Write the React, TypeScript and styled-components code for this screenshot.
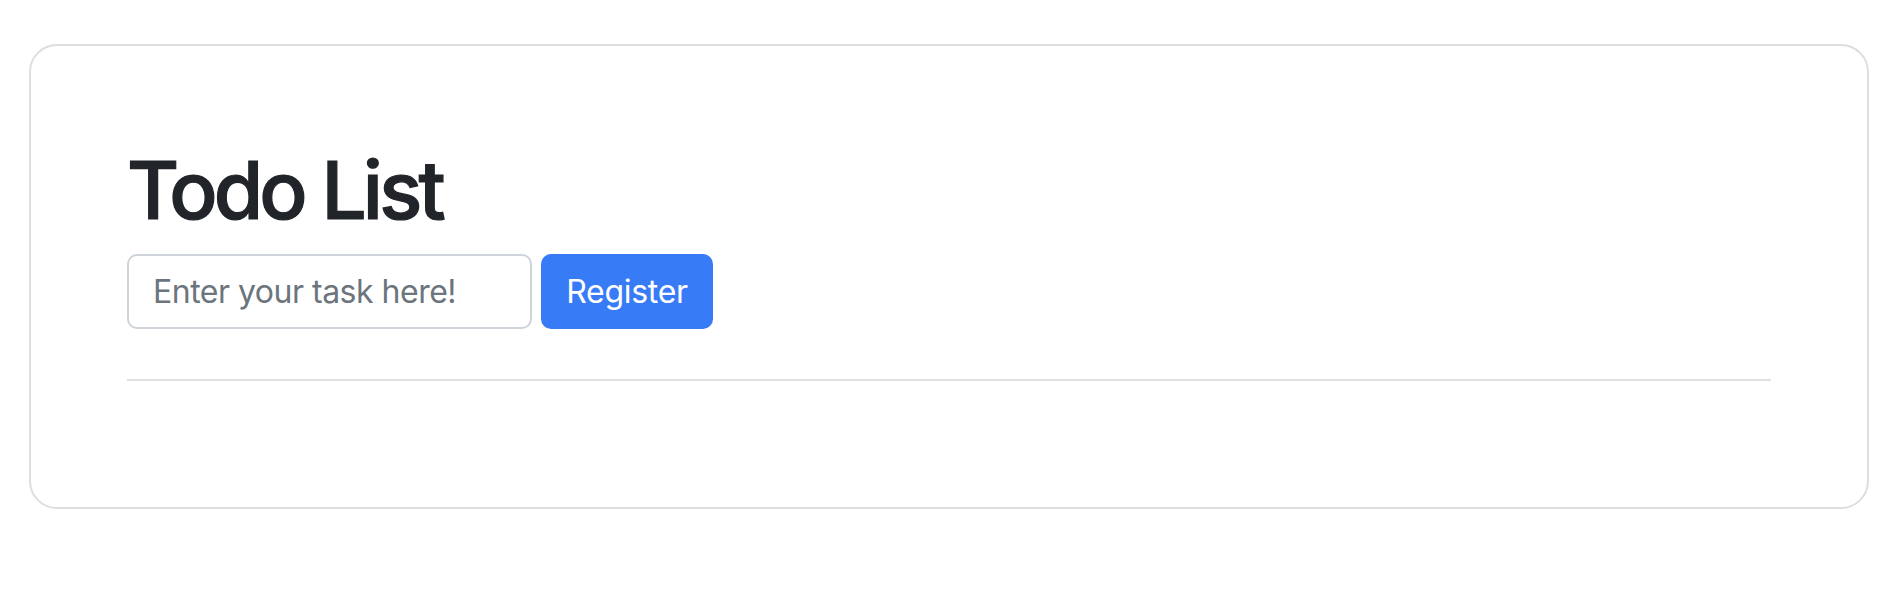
import React, { useState } from 'react';
import styled, { createGlobalStyle } from 'styled-components';

const GlobalStyle = createGlobalStyle`
    html, body {
        margin: 0;
        padding: 0;
        background: #ffffff;
    }
    * {
        box-sizing: border-box;
    }
`;

const Page = styled.div`
    padding: 44px 35px 0 29px;
    font-family: Inter, 'Liberation Sans', sans-serif;
`;

const Card = styled.div`
    border: 2px solid #dedede;
    border-radius: 28px;
    padding: 96px;
    background: #fff;
`;

const Title = styled.h1`
    margin: 0 0 16px 0;
    font-size: 80px;
    line-height: 96px;
    font-weight: 500;
    color: #212529;
    letter-spacing: -3.8px;
    -webkit-text-stroke: 1.2px #212529;
`;

const Form = styled.form`
    display: flex;
    align-items: stretch;
    gap: 9px;
`;

const TaskInput = styled.input`
    width: 405px;
    height: 75px;
    padding: 0 24px;
    border: 2px solid #ced4da;
    border-radius: 10px;
    font-family: inherit;
    font-size: 32px;
    letter-spacing: -0.5px;
    color: #212529;
    outline: none;
    &::placeholder {
        color: #6c757d;
    }
`;

const RegisterButton = styled.button`
    width: 172px;
    height: 75px;
    border: none;
    border-radius: 10px;
    background: #387bf7;
    color: #fff;
    font-family: inherit;
    font-size: 32px;
    letter-spacing: -0.3px;
    cursor: pointer;
`;

const Divider = styled.hr`
    margin: 50px 0 30px 0;
    border: none;
    border-top: 2px solid #dfdfdf;
`;

const TodoList = styled.ul`
    margin: 0;
    padding: 0;
    list-style: none;
`;

export default function App() {
    const [task, setTask] = useState('');
    const [todos, setTodos] = useState<string[]>([]);

    const handleSubmit = (e: React.FormEvent) => {
        e.preventDefault();
        if (!task.trim()) return;
        setTodos([...todos, task.trim()]);
        setTask('');
    };

    return (
        <Page>
            <GlobalStyle />
            <Card>
                <Title>Todo List</Title>
                <Form onSubmit={handleSubmit}>
                    <TaskInput
                        placeholder="Enter your task here!"
                        value={task}
                        onChange={(e) => setTask(e.target.value)}
                    />
                    <RegisterButton type="submit">Register</RegisterButton>
                </Form>
                <Divider />
                <TodoList>
                    {todos.map((t, i) => (
                        <li key={i}>{t}</li>
                    ))}
                </TodoList>
            </Card>
        </Page>
    );
}
